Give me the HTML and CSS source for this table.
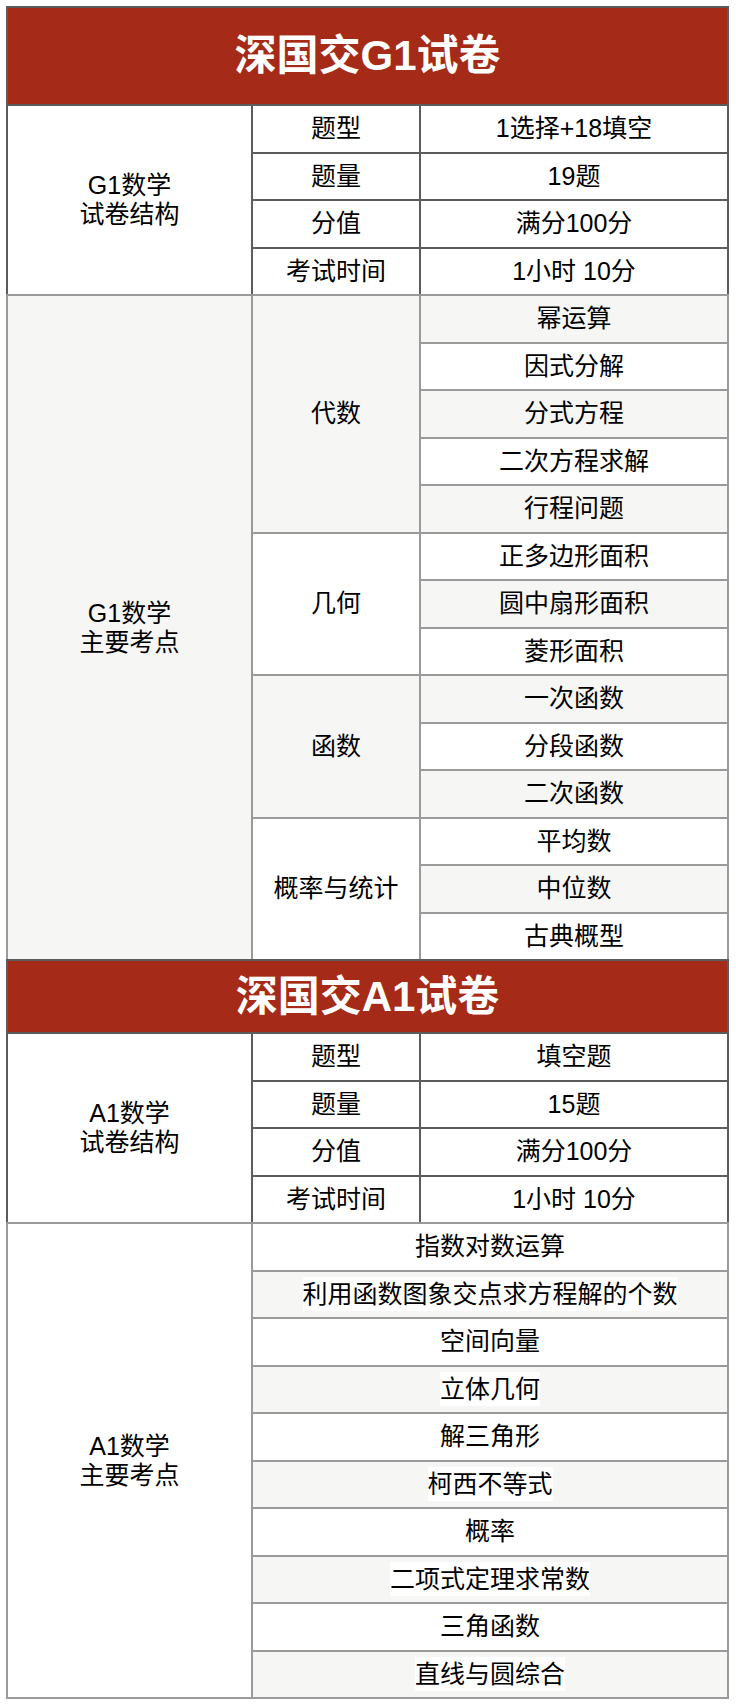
FILE: index.html
```html
<!DOCTYPE html>
<html lang="zh-CN">
<head>
<meta charset="utf-8">
<title>深国交试卷</title>
<link rel="stylesheet" href="styles.css">
</head>
<body>
<table class="exam">
  <colgroup><col class="c1"><col class="c2"><col class="c3"></colgroup>
  <tbody>
    <tr class="head head-g1"><th colspan="3">深国交G1试卷</th></tr>
  </tbody>
  <tbody class="struct">
    <tr><td rowspan="4" class="label">G1数学<br>试卷结构</td><td>题型</td><td>1选择+18填空</td></tr>
    <tr><td>题量</td><td>19题</td></tr>
    <tr><td>分值</td><td>满分100分</td></tr>
    <tr><td>考试时间</td><td>1小时 10分</td></tr>
  </tbody>
  <tbody class="key">
    <tr><td rowspan="14" class="label g">G1数学<br>主要考点</td><td rowspan="5" class="g">代数</td><td class="g">幂运算</td></tr>
    <tr><td>因式分解</td></tr>
    <tr><td class="g">分式方程</td></tr>
    <tr><td>二次方程求解</td></tr>
    <tr><td class="g">行程问题</td></tr>
    <tr><td rowspan="3">几何</td><td>正多边形面积</td></tr>
    <tr><td class="g">圆中扇形面积</td></tr>
    <tr><td>菱形面积</td></tr>
    <tr><td rowspan="3" class="g">函数</td><td class="g">一次函数</td></tr>
    <tr><td>分段函数</td></tr>
    <tr><td class="g">二次函数</td></tr>
    <tr><td rowspan="3">概率与统计</td><td>平均数</td></tr>
    <tr><td class="g">中位数</td></tr>
    <tr><td>古典概型</td></tr>
  </tbody>
  <tbody>
    <tr class="head head-a1"><th colspan="3">深国交A1试卷</th></tr>
  </tbody>
  <tbody class="struct">
    <tr><td rowspan="4" class="label">A1数学<br>试卷结构</td><td>题型</td><td>填空题</td></tr>
    <tr><td>题量</td><td>15题</td></tr>
    <tr><td>分值</td><td>满分100分</td></tr>
    <tr><td>考试时间</td><td>1小时 10分</td></tr>
  </tbody>
  <tbody class="key">
    <tr><td rowspan="10" class="label btm">A1数学<br>主要考点</td><td colspan="2">指数对数运算</td></tr>
    <tr><td colspan="2" class="g"><span class="hl">利用函数图象交点求方程解的个数</span></td></tr>
    <tr><td colspan="2">空间向量</td></tr>
    <tr><td colspan="2" class="g"><span class="hl">立体几何</span></td></tr>
    <tr><td colspan="2">解三角形</td></tr>
    <tr><td colspan="2" class="g"><span class="hl">柯西不等式</span></td></tr>
    <tr><td colspan="2">概率</td></tr>
    <tr><td colspan="2" class="g"><span class="hl">二项式定理求常数</span></td></tr>
    <tr><td colspan="2">三角函数</td></tr>
    <tr class="last"><td colspan="2" class="g btm"><span class="hl">直线与圆综合</span></td></tr>
  </tbody>
</table>
</body>
</html>
```

FILE: styles.css
```css
html, body {
  margin: 0;
  padding: 0;
  background: #ffffff;
}

body {
  padding: 6px 0 0 6px;
  font-family: "Liberation Sans", "Noto Sans CJK SC", sans-serif;
  font-size: 25px;
  color: #000000;
}

.exam {
  width: 723px;
  table-layout: fixed;
  border-collapse: separate;
  border-spacing: 0;
}

.c1 { width: 245px; }
.c2 { width: 168px; }
.c3 { width: 310px; }

.exam th,
.exam td {
  box-sizing: border-box;
  padding: 0;
  text-align: center;
  vertical-align: middle;
  border-top: 2px solid #5c5c5c;
  border-left: 2px solid #5c5c5c;
  line-height: 29px;
  font-weight: normal;
  background: #ffffff;
}

.exam th:last-child,
.exam td:last-child {
  border-right: 2px solid #5c5c5c;
}

.key td,
.key td:last-child {
  border-color: #9a9a9a;
}

.exam td.btm {
  border-bottom: 2px solid #9a9a9a;
}

.exam tr { height: 47.5px; }
.exam tr.last { height: 49.5px; }

.exam .head-g1 { height: 98px; }
.exam .head-a1 { height: 73px; }

.exam .head th {
  background: #a52a17;
  color: #ffffff;
  font-size: 42px;
  font-weight: bold;
  line-height: 50px;
}

.exam td.g {
  background: #f6f6f5;
}

.hl {
  display: inline-block;
  background: #ffffff;
  line-height: 34px;
  vertical-align: middle;
}
```
